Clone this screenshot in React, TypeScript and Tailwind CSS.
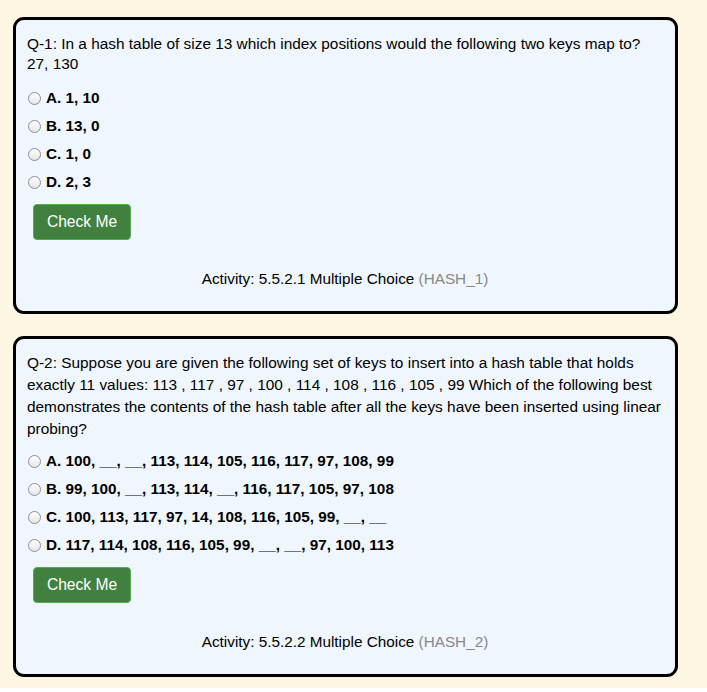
import React from "react"

type Question = {
  id: string
  prompt: string
  textCls: string
  listCls: string
  options: string[]
  activity: string
  label: string
}

const QUESTIONS: Question[] = [
  {
    id: "q1",
    prompt: "Q-1: In a hash table of size 13 which index positions would the following two keys map to? 27, 130",
    textCls: "leading-[20px] pt-[14px]",
    listCls: "mt-[10px]",
    options: ["A. 1, 10", "B. 13, 0", "C. 1, 0", "D. 2, 3"],
    activity: "Activity: 5.5.2.1 Multiple Choice",
    label: "(HASH_1)",
  },
  {
    id: "q2",
    prompt:
      "Q-2: Suppose you are given the following set of keys to insert into a hash table that holds exactly 11 values: 113 , 117 , 97 , 100 , 114 , 108 , 116 , 105 , 99 Which of the following best demonstrates the contents of the hash table after all the keys have been inserted using linear probing?",
    textCls: "leading-[22px] pt-[13px]",
    listCls: "mt-[7px]",
    options: [
      "A. 100, __, __, 113, 114, 105, 116, 117, 97, 108, 99",
      "B. 99, 100, __, 113, 114, __, 116, 117, 105, 97, 108",
      "C. 100, 113, 117, 97, 14, 108, 116, 105, 99, __, __",
      "D. 117, 114, 108, 116, 105, 99, __, __, 97, 100, 113",
    ],
    activity: "Activity: 5.5.2.2 Multiple Choice",
    label: "(HASH_2)",
  },
]

function Card({ q }: { q: Question }) {
  return (
    <div className="border-[3px] border-black rounded-[11px] bg-[#eff6fe] pl-[11px] pr-[12px] pb-[22px]">
      {/* Question text */}
      <p className={`text-[15.4px] text-black ${q.textCls}`}>{q.prompt}</p>

      {/* Options */}
      <div className={`flex flex-col ${q.listCls}`}>
        {q.options.map((opt) => (
          <label key={opt} className="h-[28px] flex items-center gap-[5px] pl-[1px]">
            <span className="w-[13px] h-[13px] rounded-full border border-[#8e8e96] bg-gradient-to-b from-white to-[#e6e6e6] shrink-0" />
            <span className="font-bold text-[15.3px] text-black">{opt}</span>
          </label>
        ))}
      </div>

      <button className="mt-[8px] ml-[6px] w-[98px] h-[36px] rounded-[4px] bg-[#41803f] border border-[#4eae4c] text-white text-[15.6px]">
        Check Me
      </button>

      <p className="mt-[28px] text-center text-[15.3px] leading-[21px] text-black">
        {q.activity} <span className="text-[#888888]">{q.label}</span>
      </p>
    </div>
  )
}

export default function App() {
  return (
    <div className="bg-white w-[707px] h-[692px] font-['Liberation_Sans',Arial,sans-serif]">
      <div className="bg-[#fdf6e3] pt-[17px] pb-[11px] pl-[13px] pr-[29px] flex flex-col gap-[22px]">
        {QUESTIONS.map((q) => (
          <Card key={q.id} q={q} />
        ))}
      </div>
    </div>
  )
}
